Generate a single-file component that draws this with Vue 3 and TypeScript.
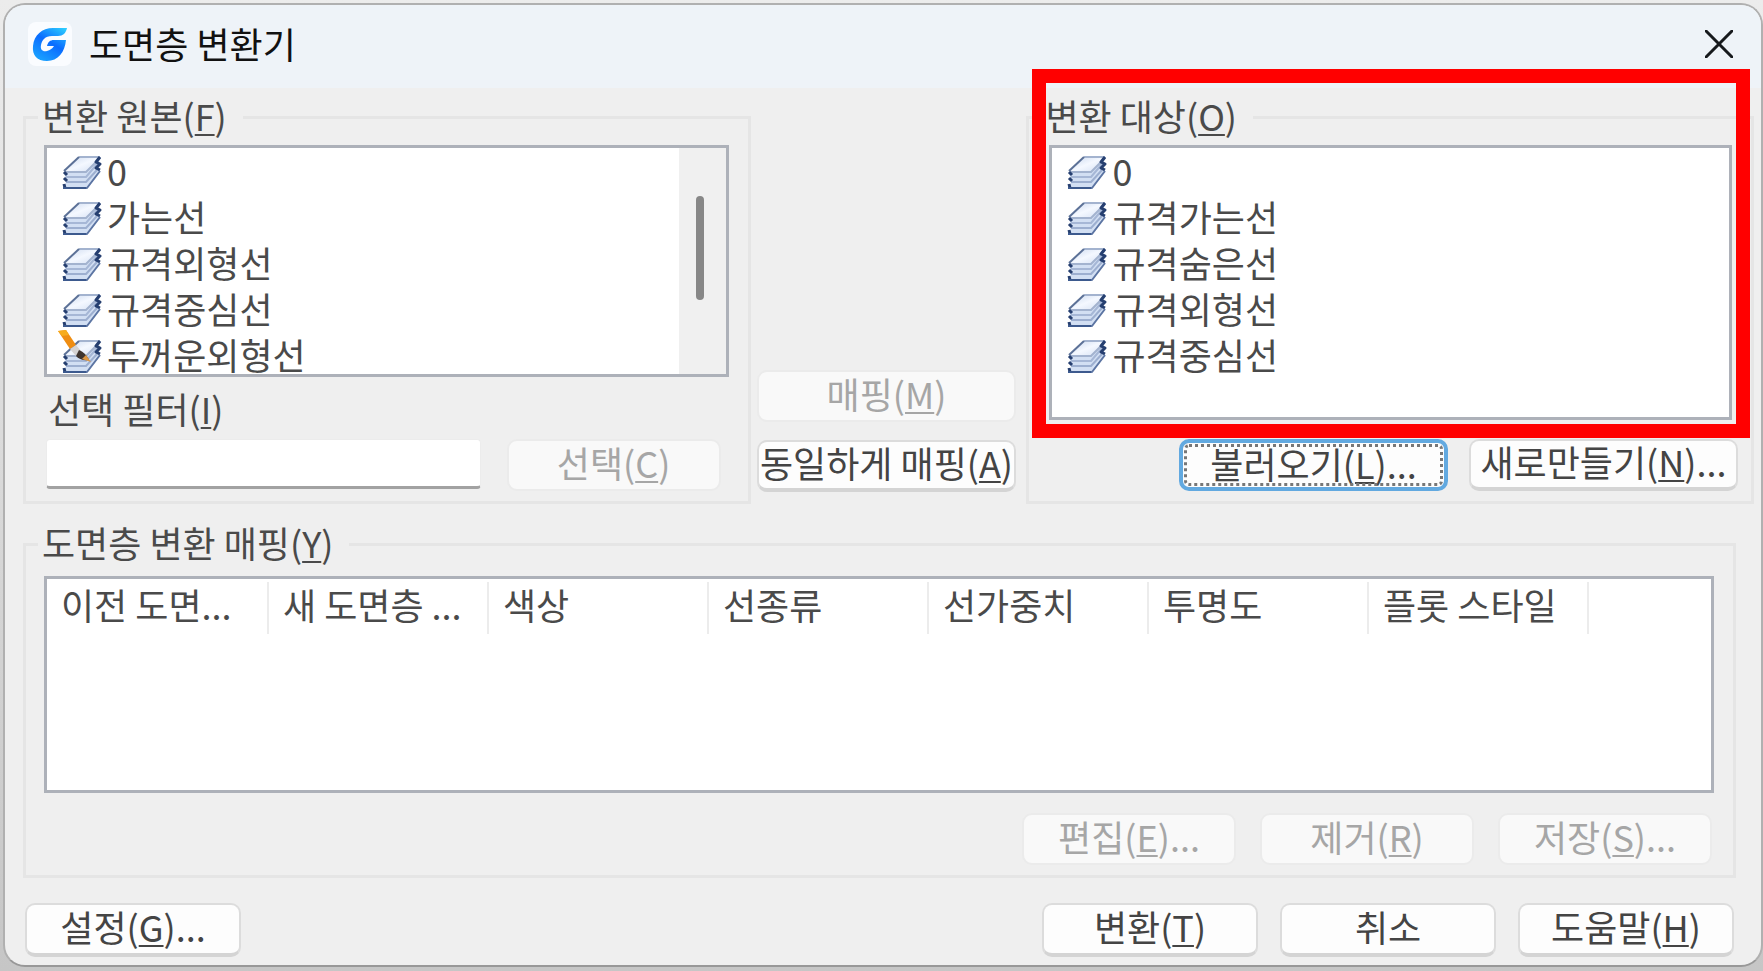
<script setup lang="ts">
import { ref } from 'vue'

interface Layer {
  name: string
  unused?: boolean
}

const sourceLayers: Layer[] = [
  { name: '0' },
  { name: '가는선' },
  { name: '규격외형선' },
  { name: '규격중심선' },
  { name: '두꺼운외형선', unused: true },
]

const targetLayers: Layer[] = [
  { name: '0' },
  { name: '규격가는선' },
  { name: '규격숨은선' },
  { name: '규격외형선' },
  { name: '규격중심선' },
]

const columns: string[] = ['이전 도면...', '새 도면층 ...', '색상', '선종류', '선가중치', '투명도', '플롯 스타일']

const filterText = ref('')
</script>

<template>
  <div class="desktop">
    <svg class="defs" width="0" height="0" aria-hidden="true">
      <defs>
        <linearGradient id="sheet" x1="0" y1="0" x2="1" y2="1">
          <stop offset="0" stop-color="#c9d7ee" />
          <stop offset="0.5" stop-color="#f4f8ff" />
          <stop offset="1" stop-color="#d3dff3" />
        </linearGradient>
        <linearGradient id="logo" x1="0.9" y1="0" x2="0.3" y2="1">
          <stop offset="0" stop-color="#2ccbff" />
          <stop offset="0.5" stop-color="#0a6cff" />
          <stop offset="1" stop-color="#1aa0ff" />
        </linearGradient>
        <g id="layers" stroke-linejoin="round">
          <path d="M2 32 L4 26 L2 16 L17 1 L39 1 L36 8 L38 14 L25 32 Z" fill="#d2dff3" />
          <path d="M4 26 H24 L35 14" fill="none" stroke="#9dafd0" stroke-width="2" />
          <path d="M4 21 H24 L35 8" fill="none" stroke="#a6b7d6" stroke-width="2" />
          <path d="M2 15 L17 1 H38 L24 16 H2 Z" fill="url(#sheet)" />
          <path d="M17 1 H38 M3 16 H24 L38 2" fill="none" stroke="#a3b3cf" stroke-width="2" />
          <path d="M2 15 L17 1" fill="none" stroke="#5c7197" stroke-width="2" />
          <path d="M2 16 L5 19 M2 22 L5 25 M2 28 L3 32 M38 1 L34 6 L38 8 L34 12 L38 14" fill="none" stroke="#263f70" stroke-width="3" />
          <path d="M1 32 H25 L38 15" fill="none" stroke="#5c75a3" stroke-width="2" />
          <path d="M1 32 H24" fill="none" stroke="#3d5a8e" stroke-width="2" />
        </g>
      </defs>
    </svg>

    <main class="window">
      <header class="titlebar">
        <svg class="logo" viewBox="0 0 44 44" aria-hidden="true">
          <rect width="44" height="44" rx="8" fill="#fafcff" />
          <path d="M39 6 C38 11 35 14 30 14 H24 C17 14 14 18 13 23 C12 28 15 30 19 29 C22 28 24 27 26 24 H19 C20 20 22 18 26 18 H38 C37 30 30 39 19 39 C9 39 4 33 5 24 C6 13 14 6 25 6 Z" fill="url(#logo)" />
        </svg>
        <h1>도면층 변환기</h1>
        <button class="close" type="button" aria-label="닫기">
          <svg viewBox="0 0 28 28" aria-hidden="true"><path d="M1 1 L27 27 M27 1 L1 27" fill="none" stroke="#16191c" stroke-width="3" stroke-linecap="round" /></svg>
        </button>
      </header>

      <div class="body">
        <div class="upper">
          <fieldset class="group">
            <legend>변환 원본(<u>F</u>)</legend>
            <div class="listbox source">
              <ul role="listbox" aria-label="변환 원본">
                <li v-for="layer in sourceLayers" :key="layer.name" role="option">
                  <svg class="layer-icon" viewBox="0 0 40 34" aria-hidden="true">
                    <use href="#layers" />
                    <g v-if="layer.unused">
                      <path d="M-4 -9 L4 -10 L14 5 L8 9 L2 0 Z" fill="#ef8d12" />
                      <path d="M-4 -9 L4 -10 L7 -5 L0 -4 Z" fill="#f7ac1c" />
                      <path d="M8 9 L14 5 L20 12 L14 16 Z" fill="#d5d3d3" />
                      <path d="M14 16 L17 10 Q24 13 27 20 Q18 21 14 16 Z" fill="#3f352f" />
                      <path d="M20 19 L24 15 L29 22 Z" fill="#dc9643" />
                    </g>
                  </svg>
                  <span>{{ layer.name }}</span>
                </li>
              </ul>
              <div class="scrollbar"><div class="thumb"></div></div>
            </div>
            <label class="filter-label" for="filter">선택 필터(<u>I</u>)</label>
            <div class="filter-row">
              <input id="filter" v-model="filterText" type="text" />
              <button class="btn" type="button" disabled>선택(<u>C</u>)</button>
            </div>
          </fieldset>

          <div class="middle">
            <button class="btn" type="button" disabled>매핑(<u>M</u>)</button>
            <button class="btn" type="button">동일하게 매핑(<u>A</u>)</button>
          </div>

          <div class="target">
            <fieldset class="group">
              <legend>변환 대상(<u>O</u>)</legend>
              <div class="listbox">
                <ul role="listbox" aria-label="변환 대상">
                  <li v-for="layer in targetLayers" :key="layer.name" role="option">
                    <svg class="layer-icon" viewBox="0 0 40 34" aria-hidden="true"><use href="#layers" /></svg>
                    <span>{{ layer.name }}</span>
                  </li>
                </ul>
              </div>
              <div class="target-actions">
                <button class="btn focused" type="button">불러오기(<u>L</u>)...</button>
                <button class="btn" type="button">새로만들기(<u>N</u>)...</button>
              </div>
            </fieldset>
            <div class="highlight"></div>
          </div>
        </div>

        <fieldset class="group mapping">
          <legend>도면층 변환 매핑(<u>Y</u>)</legend>
          <div class="table-box">
            <table>
              <thead>
                <tr>
                  <th v-for="column in columns" :key="column" scope="col"><span>{{ column }}</span></th>
                  <td></td>
                </tr>
              </thead>
            </table>
          </div>
          <div class="actions">
            <button class="btn" type="button" disabled>편집(<u>E</u>)...</button>
            <button class="btn" type="button" disabled>제거(<u>R</u>)</button>
            <button class="btn" type="button" disabled>저장(<u>S</u>)...</button>
          </div>
        </fieldset>

        <footer class="actions">
          <button class="btn settings" type="button">설정(<u>G</u>)...</button>
          <button class="btn" type="button">변환(<u>T</u>)</button>
          <button class="btn" type="button">취소</button>
          <button class="btn" type="button">도움말(<u>H</u>)</button>
        </footer>
      </div>
    </main>
  </div>
</template>

<style>
body {
  margin: 0;
  background: #d2d2d2;
}
</style>

<style scoped>
* {
  box-sizing: border-box;
}

.desktop {
  min-height: 100vh;
  padding: 3px 0 4px 3px;
  display: flex;
  background: linear-gradient(#ececec, #c6c6c6);
  font-family: "Noto Sans CJK KR", "Noto Sans", sans-serif;
  font-size: 36px;
  font-weight: 400;
  line-height: 44px;
  color: #4a4a4a;
}

.defs {
  position: absolute;
}

.window {
  flex: 1;
  min-width: 0;
  display: flex;
  flex-direction: column;
  border: 2px solid #b0b0b0;
  border-bottom-color: #989898;
  border-radius: 22px;
  background: #efefef;
  overflow: hidden;
}

.titlebar {
  height: 83px;
  padding: 0 28px 5px 23px;
  display: flex;
  align-items: center;
  background: #eef3f8;
  color: #111;
}

.logo {
  width: 44px;
  height: 44px;
}

h1 {
  flex: 1;
  margin: 0 0 0 17px;
  padding-bottom: 2px;
  font-size: 36px;
  font-weight: 400;
  line-height: 44px;
}

.close {
  width: 28px;
  height: 28px;
  padding: 0;
  border: 0;
  background: none;
}

.close svg {
  display: block;
}

.body {
  flex: 1;
  padding: 7px 7px 8px 18px;
  display: flex;
  flex-direction: column;
}

.upper {
  display: grid;
  grid-template-columns: 728fr 260fr 728fr;
  gap: 8px;
}

.group {
  min-width: 0;
  margin: 0;
  padding: 6px 19px 10px 18px;
  border: 3px solid #e5e5e5;
  display: flex;
  flex-direction: column;
}

legend {
  margin-left: -6px;
  padding: 0 16px 4px 4px;
  line-height: 40px;
}

u {
  text-decoration-thickness: 2px;
  text-underline-offset: 3px;
}

.listbox {
  flex: 1;
  display: flex;
  border: 3px solid #adb1b9;
  background: #fff;
  overflow: hidden;
}

.source {
  flex: none;
  height: 232px;
}

ul {
  flex: 1;
  margin: 0;
  padding: 2px 0 0 15px;
  list-style: none;
}

li {
  height: 46px;
  display: flex;
  align-items: center;
  gap: 5px;
}

li span {
  padding-bottom: 6px;
  line-height: 40px;
}

.layer-icon {
  width: 40px;
  height: 34px;
  overflow: visible;
}

.scrollbar {
  width: 47px;
  padding: 48px 4px 0 0;
  background: #f0f0f0;
}

.thumb {
  width: 8px;
  height: 104px;
  margin: 0 auto;
  border-radius: 4px;
  background: #878787;
}

.filter-label {
  margin: 9px 0 9px 4px;
}

.filter-row {
  display: flex;
  gap: 26px;
  padding-right: 8px;
}

input {
  flex: 1;
  min-width: 0;
  height: 50px;
  margin-left: 2px;
  padding: 0 12px;
  border: 1px solid #ececec;
  border-bottom: 3px solid #a2a2a2;
  border-radius: 4px;
  background: #fff;
  font: inherit;
}

.btn {
  width: 214px;
  height: 52px;
  padding: 0 0 6px;
  border: 2px solid #dcdcdc;
  border-bottom: 4px solid #d4d4d4;
  border-radius: 10px;
  background: #fdfdfd;
  color: #444;
  font: inherit;
  line-height: 40px;
  white-space: nowrap;
}

.btn:disabled {
  border: 2px solid #ebebeb;
  background: #f9f9f9;
  color: #a6a6a6;
}

.middle {
  display: flex;
  flex-direction: column;
  justify-content: flex-end;
  gap: 18px;
  margin: 0 2px 0 -2px;
  padding-bottom: 12px;
}

.middle .btn {
  width: 100%;
}

.target {
  position: relative;
  display: flex;
}

.target .group {
  flex: 1;
}

.target .listbox {
  margin-left: 2px;
}

.target-actions {
  margin: 19px -6px 0 0;
  display: flex;
  justify-content: flex-end;
  gap: 21px;
}

.target-actions .btn {
  width: 269px;
}

.btn.focused {
  border: 4px solid #62a9e0;
  outline: 3px dotted #777;
  outline-offset: -8px;
}

.highlight {
  position: absolute;
  top: -26px;
  right: 4px;
  bottom: 66px;
  left: 6px;
  border: 14px solid #f00;
  pointer-events: none;
}

.mapping {
  margin: 18px 18px 0 0;
  padding: 10px 19px 10px 18px;
}

.table-box {
  height: 217px;
  border: 3px solid #adb1b9;
  background: #fff;
}

table {
  width: 100%;
  table-layout: fixed;
  border-collapse: separate;
  border-spacing: 0;
}

th {
  width: 220px;
  padding: 3px 0 0;
  font-weight: 400;
  text-align: left;
}

th:first-child {
  width: 222px;
}

th span {
  display: block;
  padding: 0 0 8px 14px;
  border-right: 2px solid #ececec;
  white-space: nowrap;
}

td {
  padding: 0;
}

.actions {
  display: flex;
  justify-content: flex-end;
  gap: 24px;
}

.mapping .actions {
  margin: 20px 2px 0 0;
}

footer {
  margin: 25px 20px 0 2px;
}

footer .btn {
  width: 216px;
  height: 54px;
}

footer.actions {
  gap: 22px;
}

.settings {
  margin-right: auto;
}
</style>
